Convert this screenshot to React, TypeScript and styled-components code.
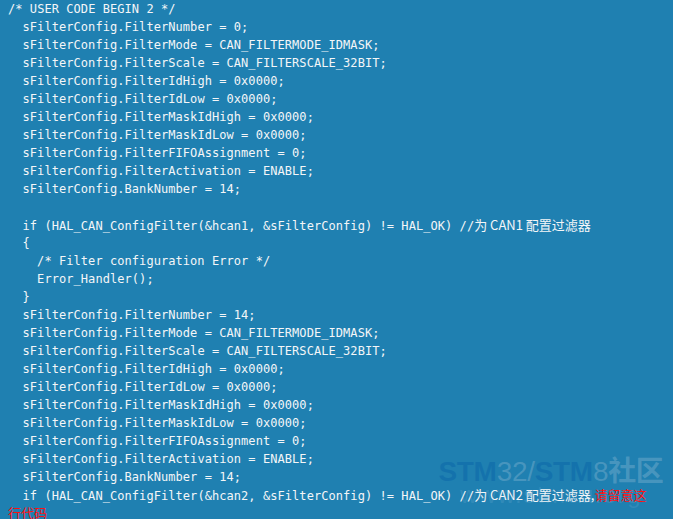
import React from "react";
import styled, { createGlobalStyle } from "styled-components";

const Global = createGlobalStyle`
  html, body {
    margin: 0;
    padding: 0;
    background: #1f80b1;
    overflow: hidden;
  }
`;

const Page = styled.div`
  position: relative;
  width: 673px;
  height: 519px;
  background: #1f80b1;
  overflow: hidden;
`;

const Code = styled.div`
  display: flex;
  flex-direction: column;
  padding: 0 0 0 8px;
  color: #f4f6f8;
  font-family: "DejaVu Sans Mono", "Liberation Mono", monospace;
  font-size: 12px;
  letter-spacing: 0.06px;
`;

const Line = styled.div<{ $indent?: number }>`
  height: 18px;
  line-height: 18px;
  white-space: pre;
  padding-left: ${(p) => (p.$indent ?? 0) * 7.28}px;
`;

const Cjk = styled.span<{ $red?: boolean }>`
  font-family: "Noto Sans CJK SC", "Noto Sans", sans-serif;
  font-size: 13px;
  letter-spacing: 0;
  color: ${(p) => (p.$red ? "#ff1010" : "inherit")};
`;

const Watermark = styled.div`
  position: absolute;
  left: 434px;
  top: 455px;
  width: 234px;
  display: flex;
  flex-direction: column;
  align-items: center;
  pointer-events: none;
`;

const MarkTitle = styled.div`
  font-family: "Liberation Sans", "Noto Sans CJK SC", sans-serif;
  font-size: 28px;
  line-height: 34px;
  white-space: nowrap;
  letter-spacing: -0.3px;
`;

const MarkPart = styled.span<{ $bold?: boolean }>`
  font-weight: ${(p) => (p.$bold ? 700 : 400)};
  color: ${(p) => (p.$bold ? "rgba(18, 112, 172, 0.85)" : "rgba(150, 190, 215, 0.35)")};
`;

const MarkUrl = styled.div`
  margin-top: -7px;
  font-family: "Liberation Sans", sans-serif;
  font-size: 24px;
  line-height: 26px;
  color: rgba(150, 195, 225, 0.16);
  letter-spacing: 1.5px;
`;

const block = (num: string) => [
  "sFilterConfig.FilterNumber = " + num + ";",
  "sFilterConfig.FilterMode = CAN_FILTERMODE_IDMASK;",
  "sFilterConfig.FilterScale = CAN_FILTERSCALE_32BIT;",
  "sFilterConfig.FilterIdHigh = 0x0000;",
  "sFilterConfig.FilterIdLow = 0x0000;",
  "sFilterConfig.FilterMaskIdHigh = 0x0000;",
  "sFilterConfig.FilterMaskIdLow = 0x0000;",
  "sFilterConfig.FilterFIFOAssignment = 0;",
  "sFilterConfig.FilterActivation = ENABLE;",
  "sFilterConfig.BankNumber = 14;",
];

export default function App() {
  const first = block("0");
  const second = block("14");
  return (
    <Page>
      <Global />
      <Watermark>
        <MarkTitle>
          <MarkPart $bold>STM</MarkPart>
          <MarkPart>32/</MarkPart>
          <MarkPart $bold>STM</MarkPart>
          <MarkPart>8</MarkPart>
          <MarkPart $bold style={{ color: "rgba(150, 190, 215, 0.35)" }}>社区</MarkPart>
        </MarkTitle>
        <MarkUrl>www.stmcu.org</MarkUrl>
      </Watermark>
      <Code>
        <Line>/* USER CODE BEGIN 2 */</Line>
        {first.map((l, i) => (
          <Line key={"a" + i} $indent={2}>{l}</Line>
        ))}
        <Line> </Line>
        <Line $indent={2}>
          {"if (HAL_CAN_ConfigFilter(&hcan1, &sFilterConfig) != HAL_OK) //"}
          <Cjk>为 CAN1 配置过滤器</Cjk>
        </Line>
        <Line $indent={2}>{"{"}</Line>
        <Line $indent={4}>/* Filter configuration Error */</Line>
        <Line $indent={4}>Error_Handler();</Line>
        <Line $indent={2}>{"}"}</Line>
        {second.map((l, i) => (
          <Line key={"b" + i} $indent={2}>{l}</Line>
        ))}
        <Line $indent={2}>
          {"if (HAL_CAN_ConfigFilter(&hcan2, &sFilterConfig) != HAL_OK) //"}
          <Cjk>为 CAN2 配置过滤器,</Cjk>
          <Cjk $red>请留意这</Cjk>
        </Line>
        <Line>
          <Cjk $red>行代码</Cjk>
        </Line>
      </Code>
    </Page>
  );
}
